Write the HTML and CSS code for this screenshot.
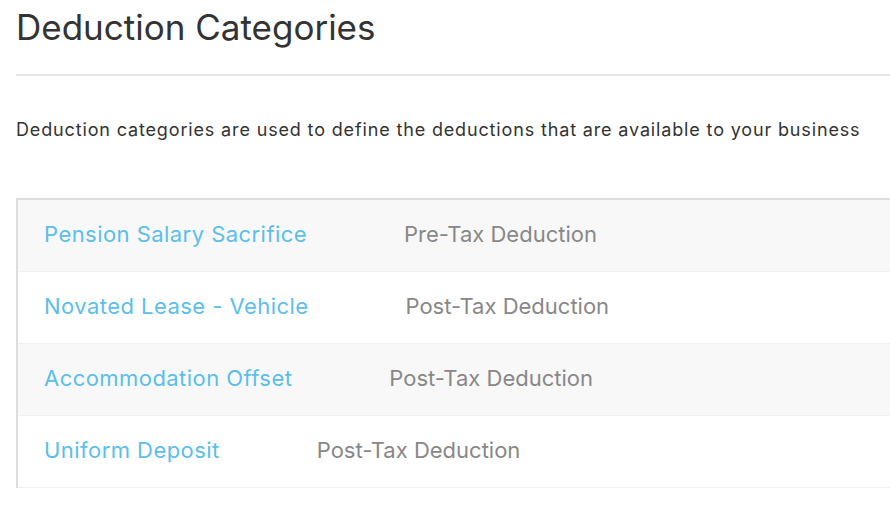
FILE: index.html
```html
<!DOCTYPE html>
<html lang="en">
<head>
<meta charset="utf-8">
<title>Deduction Categories</title>
<link rel="stylesheet" href="styles.css">
</head>
<body>
<main class="page">
  <h1 class="title">Deduction Categories</h1>
  <hr class="rule">
  <p class="intro">Deduction categories are used to define the deductions that are available to your business</p>
  <div class="table">
    <div class="row alt"><a class="name" href="#">Pension Salary Sacrifice</a><span class="type">Pre-Tax Deduction</span></div>
    <div class="row"><a class="name" href="#">Novated Lease - Vehicle</a><span class="type">Post-Tax Deduction</span></div>
    <div class="row alt"><a class="name" href="#">Accommodation Offset</a><span class="type">Post-Tax Deduction</span></div>
    <div class="row"><a class="name" href="#">Uniform Deposit</a><span class="type">Post-Tax Deduction</span></div>
  </div>
</main>
</body>
</html>
```
FILE: styles.css
```css
* { box-sizing: border-box; }
html, body { margin: 0; padding: 0; background: #fff; }
body { font-family: "Inter", "Lato", sans-serif; color: #333; overflow: hidden; }
.page { padding-left: 16px; }
.title {
  margin: 0;
  padding-top: 6px;
  font-size: 35px;
  line-height: 42px;
  font-weight: 400;
  color: #333;
}
.rule {
  margin: 26px 0 0 0;
  border: 0;
  height: 2px;
  background: #e5e5e5;
}
.intro {
  margin: 43px 0 0 0;
  font-size: 18px;
  line-height: 22px;
  letter-spacing: 0.85px;
  color: #333;
}
.table {
  margin-top: 57px;
  border-top: 2px solid #dddddd;
  border-left: 2px solid #dddddd;
}
.row {
  display: flex;
  align-items: center;
  gap: 97px;
  height: 72px;
  padding-left: 26px;
  padding-bottom: 3px;
  border-bottom: 1px solid #f0f0f0;
  background: #fff;
}
.row.alt { background: #f8f8f8; }
.name {
  color: #5bbfea;
  text-decoration: none;
  font-size: 22px;
  letter-spacing: 0.45px;
}
.type {
  color: #888;
  font-size: 22px;
}
```
